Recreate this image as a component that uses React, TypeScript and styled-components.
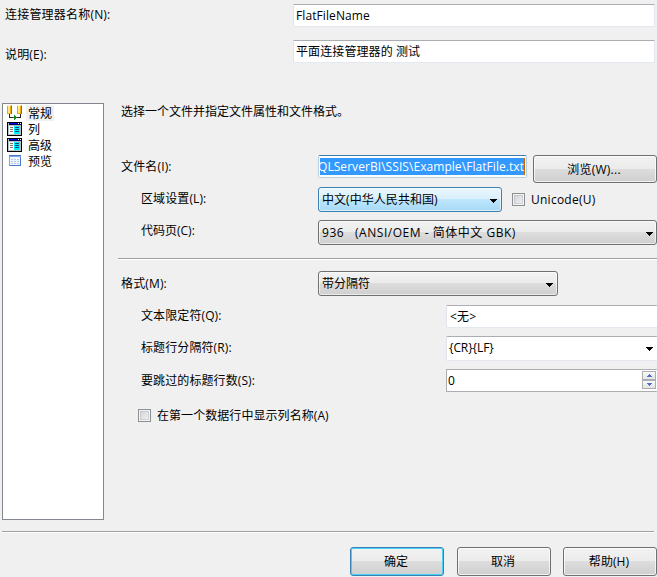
import React from 'react';
import styled, { createGlobalStyle, css } from 'styled-components';

const GlobalStyle = createGlobalStyle`
  * { box-sizing: border-box; }
  html, body { margin: 0; padding: 0; background: #f0f0f0; overflow: hidden; }
  body { font: 12px/18px "Open Sans", "Noto Sans CJK SC", sans-serif; color: #000; }
`;

const Dialog = styled.div`
  width: 657px;
  height: 577px;
  display: flex;
  flex-direction: column;
  background: #f0f0f0;
  white-space: pre;
  overflow: hidden;
`;

const Header = styled.div`
  height: 103px;
  padding: 4px 2px 0 5px;
  flex: none;
`;

const HeaderRow = styled.div`
  display: grid;
  grid-template-columns: 288px 362px;
  height: 36px;
`;

const Body = styled.div`
  display: flex;
  height: 417px;
  flex: none;
  padding-left: 2px;
`;

const Sidebar = styled.div`
  width: 102px;
  height: 417px;
  flex: none;
  background: #fff;
  border: 1px solid #828790;
  padding: 1px 0 0 4px;
`;

const NavItem = styled.div`
  display: flex;
  height: 16px;
  align-items: center;
  gap: 3px;
`;

const NavIcon = styled.svg`
  width: 16px;
  height: 16px;
  flex: none;
  display: block;
  shape-rendering: crispEdges;
`;

const NavText = styled.span<{ $active?: boolean }>`
  height: 16px;
  padding: 0 2px;
  line-height: 17px;
  background: ${p => (p.$active ? '#f0f0f0' : 'transparent')};
`;

const Form = styled.div`
  width: 539px;
  margin-left: 14px;
  flex: none;
`;

const Row = styled.div<{ $h: number }>`
  display: flex;
  align-items: flex-start;
  height: ${p => p.$h}px;
`;

const Label = styled.label<{ $top?: number; $w?: number; $indent?: number; $track?: number }>`
  display: block;
  flex: none;
  height: 18px;
  padding-top: ${p => p.$top ?? 0}px;
  padding-left: ${p => p.$indent ?? 0}px;
  width: ${p => (p.$w ? `${p.$w}px` : 'auto')};
  letter-spacing: ${p => p.$track ?? 0}px;
`;

const Field = styled.div<{ $w: number; $h?: number; $cut?: boolean; $solid?: boolean; $pad?: number; $track?: number }>`
  display: flex;
  justify-content: space-between;
  flex: none;
  width: ${p => p.$w}px;
  height: ${p => p.$h ?? 23}px;
  padding: 2px 0 0 ${p => p.$pad ?? 2}px;
  background: #fff;
  border: 1px solid #e2e8ee;
  border-color: ${p => (p.$solid ? '#abadb3' : '#abadb3 #e3e9ef #e3e9ef #e2e3ea')};
  ${p => p.$cut && css`border-right: 0;`}
  border-radius: 1px;
  letter-spacing: ${p => p.$track ?? 0}px;
`;

const FileField = styled.div`
  width: 209px;
  height: 23px;
  flex: none;
  padding: 2px 1px;
  background: #fff;
  border: 1px solid #b5cfe7;
  border-top-color: #3d7bad;
  border-radius: 2px;
`;

const Selection = styled.div`
  display: flex;
  justify-content: flex-end;
  width: 205px;
  height: 17px;
  overflow: hidden;
  background: #3399ff;
  color: #fff;
  border-right: 1px solid #cc6600;
  line-height: 18px;
  letter-spacing: 0.06px;
`;

const grey = 'linear-gradient(#f2f2f2 0, #ebebeb 49%, #dddddd 50%, #cfcfcf 100%)';
const blue = 'linear-gradient(#eaf6fd 0, #d9f0fc 49%, #bee6fd 50%, #a7d9f5 100%)';

const Select = styled.div<{ $w: number; $hot?: boolean; $track?: number }>`
  display: flex;
  justify-content: space-between;
  flex: none;
  width: ${p => p.$w}px;
  height: 25px;
  padding: 3px 4px 0 3px;
  background: ${p => (p.$hot ? blue : grey)};
  border: 1px solid ${p => (p.$hot ? '#3c7fb1' : '#707070')};
  border-radius: 3px;
  box-shadow: inset 0 0 0 1px rgba(255, 255, 255, 0.6);
  letter-spacing: ${p => p.$track ?? 0}px;
`;

const Button = styled.button<{ $w: number; $h: number; $primary?: boolean; $track?: number }>`
  flex: none;
  display: flex;
  align-items: center;
  justify-content: center;
  width: ${p => p.$w}px;
  height: ${p => p.$h}px;
  margin: 0;
  padding: 1px 2px 0 0;
  font: inherit;
  color: #000;
  background: ${grey};
  border: 1px solid ${p => (p.$primary ? '#3c7fb1' : '#707070')};
  border-radius: 3px;
  box-shadow: inset 0 0 0 1px ${p => (p.$primary ? '#48d0f8' : 'rgba(255,255,255,0.7)')};
  letter-spacing: ${p => p.$track ?? 0}px;
`;

const Check = styled.span<{ $top?: number }>`
  flex: none;
  width: 13px;
  height: 13px;
  margin-top: ${p => p.$top ?? 0}px;
  border: 1px solid #8e8f8f;
  background: linear-gradient(135deg, #cbcfd5, #f6f6f6);
  box-shadow: inset 0 0 0 1px #f4f4f4, inset 0 0 0 2px rgba(174, 179, 185, 0.45);
`;

const CheckLabel = styled.label`
  margin: -2px 0 0 6px;
  letter-spacing: 0.06px;
`;

const Arrow = styled.svg`
  flex: none;
  display: block;
  width: 7px;
  height: 4px;
  margin-top: 8px;
  shape-rendering: crispEdges;
`;

const ArrowSlot = styled.div`
  padding-right: 4px;
`;

const SelectArrowSlot = styled.div`
  margin-right: -1px;
`;

const Spinner = styled.div`
  display: flex;
  flex-direction: column;
  width: 14px;
  margin: -1px 1px 0 0;
`;

const SpinButton = styled.div`
  display: flex;
  align-items: center;
  justify-content: center;
  width: 14px;
  height: 9px;
  background: linear-gradient(#fafafa, #e4e4e4);
  border: 1px solid #abadb3;
`;

const SpinGlyph = styled.svg`
  display: block;
  width: 5px;
  height: 3px;
  shape-rendering: crispEdges;
`;

const Divider = styled.div<{ $w: number }>`
  width: ${p => p.$w}px;
  height: 2px;
  flex: none;
  background: #a0a0a0;
  border-bottom: 1px solid #fff;
`;

const Space = styled.div<{ $w?: number; $h?: number }>`
  flex: none;
  width: ${p => p.$w ?? 0}px;
  height: ${p => p.$h ?? 0}px;
`;

const FooterRule = styled.div`
  padding: 11px 0 0 2px;
  height: 27px;
  flex: none;
`;

const Footer = styled.div`
  display: flex;
  height: 29px;
  padding-left: 350px;
  flex: none;
`;

const DownArrow = () => (
  <Arrow viewBox="0 0 7 4"><path d="M0 0h7v1H6v1H5v1H4v1H3V3H2V2H1V1H0z" /></Arrow>
);

const ConnectionIcon = () => (
  <NavIcon viewBox="0 0 16 16">
    <path fill="#f0a800" d="M0 0h5v9H0zM10 0h5v9h-5z" />
    <path fill="#ffe98a" d="M1 1h2v7H1zM11 1h2v7h-2z" />
    <path fill="#a86c00" d="M4 1h1v8H4zM14 1h1v8h-1z" />
    <path fill="#fff6cc" d="M0 0h4v1H0zM10 0h4v1h-4z" />
    <path fill="#222" d="M2 9h1v3h4v1H2zM13 9h1v4H9v-1h4z" />
    <path fill="#168a16" d="M7 10h1v1h1v1h1v1H9v1H8v1H7v-2H6v-1h1z" />
  </NavIcon>
);

const ColumnsIcon = () => (
  <NavIcon viewBox="0 0 16 16">
    <path fill="#000" d="M0 1h15v14H0z" />
    <path fill="#b8c0c0" d="M1 2h13v12H1z" />
    <path fill="#000060" d="M2 2h12v2H2z" />
    <path fill="#0000e0" d="M3 2h7v1H3z" />
    <path fill="#fff" d="M11 2h1v1h-1zM13 2h1v1h-1zM2 5h5v8H2z" />
    <path fill="#00f0ff" d="M7 5h6v8H7z" />
    <path fill="#777" d="M3 6h3v1H3zM3 8h3v1H3zM3 10h3v1H3z" />
    <path fill="#064a70" d="M8 6h4v1H8zM8 8h4v1H8zM8 10h4v1H8z" />
  </NavIcon>
);

const PreviewIcon = () => (
  <NavIcon viewBox="0 0 16 16">
    <path fill="#86a5dc" d="M2 2h12v11H2z" />
    <path fill="#4a78d0" d="M2 2h12v1H2zM13 4h1v9h-1zM3 12h11v1H3z" />
    <path fill="#eef5ff" d="M3 4h10v8H3z" />
    <path fill="#b4c8e6" d="M4 6h2v1H4zM7 6h2v1H7zM10 6h2v1h-2zM4 8h2v1H4zM7 8h2v1H7zM10 8h2v1h-2zM4 10h2v1H4zM7 10h2v1H7zM10 10h2v1h-2z" />
  </NavIcon>
);

const pages = [
  { name: '常规', icon: <ConnectionIcon /> },
  { name: '列', icon: <ColumnsIcon /> },
  { name: '高级', icon: <ColumnsIcon /> },
  { name: '预览', icon: <PreviewIcon /> },
];

export default function App() {
  return (
    <>
      <GlobalStyle />
      <Dialog>
        <Header>
          <HeaderRow>
            <Label $top={2} $track={0.2}>连接管理器名称(N):</Label>
            <Field $w={362} $track={0.1}>FlatFileName</Field>
          </HeaderRow>
          <HeaderRow>
            <Label $top={6} $track={0.15}>说明(E):</Label>
            <Field $w={362} $track={0.1}>平面连接管理器的 测试</Field>
          </HeaderRow>
        </Header>
        <Body>
          <Sidebar>
            {pages.map((page, i) => (
              <NavItem key={page.name}>
                {page.icon}
                <NavText $active={i === 0}>{page.name}</NavText>
              </NavItem>
            ))}
          </Sidebar>
          <Form>
            <Row $h={52}>
              <Label $indent={3}>选择一个文件并指定文件属性和文件格式。</Label>
            </Row>
            <Row $h={32}>
              <Label $w={200} $indent={3} $top={3} $track={0.15}>文件名(I):</Label>
              <FileField><Selection>QLServerBI\SSIS\Example\FlatFile.txt</Selection></FileField>
              <Space $w={6} />
              <Button $w={124} $h={28} $track={0.25}>浏览(W)...</Button>
            </Row>
            <Row $h={33}>
              <Label $w={200} $indent={23} $top={3} $track={0.1}>区域设置(L):</Label>
              <Select $w={184} $hot $track={0.05}>中文(中华人民共和国)<DownArrow /></Select>
              <Space $w={10} />
              <Check $top={6} />
              <Label $top={4} $indent={6} $track={0.25}>Unicode(U)</Label>
            </Row>
            <Row $h={38}>
              <Label $w={200} $indent={23} $top={2}>代码页(C):</Label>
              <Select $w={339} $track={0.52}>
                936   (ANSI/OEM - 简体中文 GBK)
                <SelectArrowSlot><DownArrow /></SelectArrowSlot>
              </Select>
            </Row>
            <Divider $w={539} />
            <Space $h={11} />
            <Row $h={34}>
              <Label $w={200} $indent={3} $top={4} $track={0.15}>格式(M):</Label>
              <Select $w={240}>带分隔符<DownArrow /></Select>
            </Row>
            <Row $h={31}>
              <Label $w={328} $indent={23} $top={2} $track={0.1}>文本限定符(Q):</Label>
              <Field $w={211} $cut $pad={3} $track={0.15}>{'<无>'}</Field>
            </Row>
            <Row $h={33}>
              <Label $w={328} $indent={23} $top={3} $track={0.1}>标题行分隔符(R):</Label>
              <Field $w={211} $h={25} $cut $track={-0.1}>{'{CR}{LF}'}<ArrowSlot><DownArrow /></ArrowSlot></Field>
            </Row>
            <Row $h={40}>
              <Label $w={328} $indent={23} $top={3} $track={0.1}>要跳过的标题行数(S):</Label>
              <Field $w={211} $cut $solid $pad={1}>
                0
                <Spinner>
                  <SpinButton><SpinGlyph><path fill="#5271c4" d="M2 0h1v1h1v1h1v1H0V2h1V1h1z" /></SpinGlyph></SpinButton>
                  <SpinButton><SpinGlyph><path fill="#5271c4" d="M0 0h5v1H4v1H3v1H2V2H1V1H0z" /></SpinGlyph></SpinButton>
                </Spinner>
              </Field>
            </Row>
            <Row $h={20}>
              <Space $w={20} />
              <Check />
              <CheckLabel>在第一个数据行中显示列名称(A)</CheckLabel>
            </Row>
          </Form>
        </Body>
        <FooterRule><Divider $w={652} /></FooterRule>
        <Footer>
          <Button $w={94} $h={29} $primary>确定</Button>
          <Space $w={13} />
          <Button $w={94} $h={29}>取消</Button>
          <Space $w={12} />
          <Button $w={94} $h={29} $track={0.1}>帮助(H)</Button>
        </Footer>
      </Dialog>
    </>
  );
}
